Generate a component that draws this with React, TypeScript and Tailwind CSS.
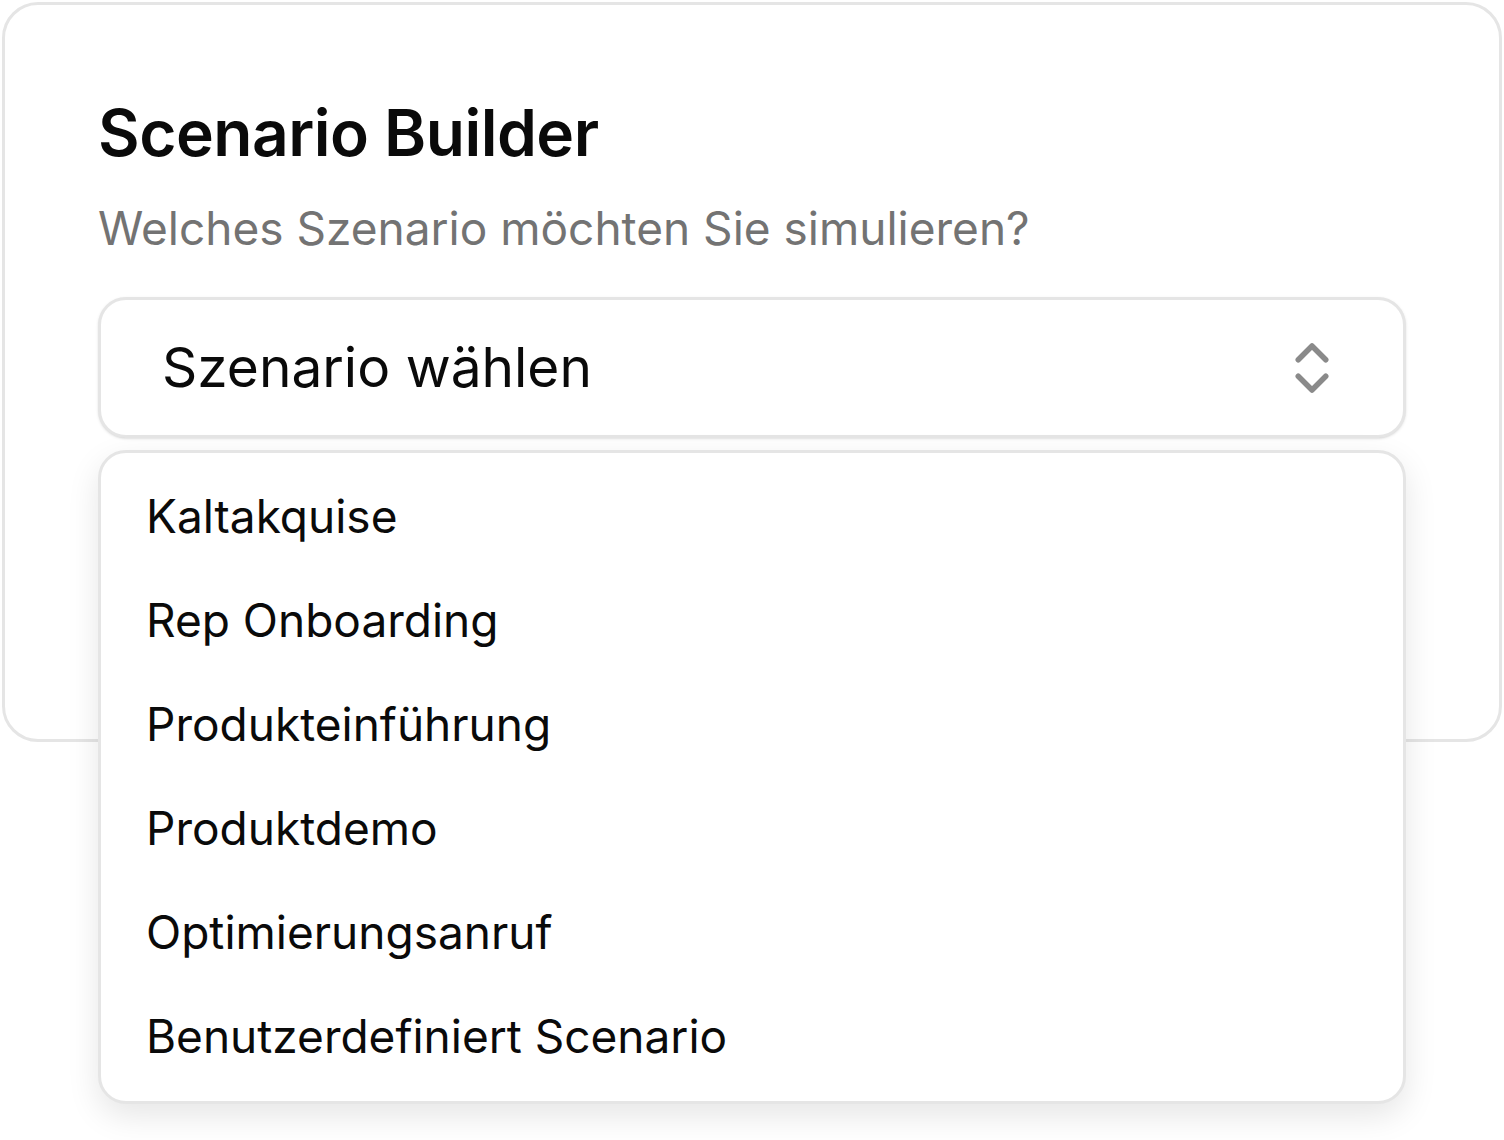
import { ChevronsUpDown } from "lucide-react"

const scenarios = [
  "Kaltakquise",
  "Rep Onboarding",
  "Produkteinführung",
  "Produktdemo",
  "Optimierungsanruf",
  "Benutzerdefiniert Scenario",
]

export default function App() {
  return (
    <div className="min-h-[1140px] bg-white pl-[2px] pt-[2px] font-['Inter',sans-serif]">
      <div className="relative w-[1500px] h-[740px] rounded-[36px] border-[3px] border-[#e5e5e5] bg-white px-[93px] pt-[88px]">
        {/* Header */}
        <h1 className="text-[64px] leading-[80px] font-semibold tracking-[-0.5px] text-[#0a0a0a]">
          Scenario Builder
        </h1>
        <p className="mt-[25px] text-[46px] leading-[60px] text-[#737373]">
          Welches Szenario möchten Sie simulieren?
        </p>

        {/* Select trigger */}
        <div className="relative mt-[39px]">
          <button
            type="button"
            className="flex h-[141px] w-full items-center justify-between rounded-[28px] border-[3px] border-[#e5e5e5] bg-white pl-[61px] pr-[58px] shadow-sm"
          >
            <span className="text-[55px] font-normal text-[#0a0a0a]">Szenario wählen</span>
            <ChevronsUpDown className="h-[66px] w-[66px] text-[#8a8a8a]" strokeWidth={2} />
          </button>

          {/* Dropdown */}
          <div className="absolute left-0 top-[153px] z-10 w-full rounded-[28px] border-[3px] border-[#e5e5e5] bg-white pt-[11px] pb-[13px] px-[9px] shadow-[0_12px_32px_rgba(0,0,0,0.1)]">
            {scenarios.map((s) => (
              <div key={s} className="flex h-[104px] items-center px-[36px] text-[46px] text-[#0a0a0a]">
                {s}
              </div>
            ))}
          </div>
        </div>
      </div>
    </div>
  )
}
